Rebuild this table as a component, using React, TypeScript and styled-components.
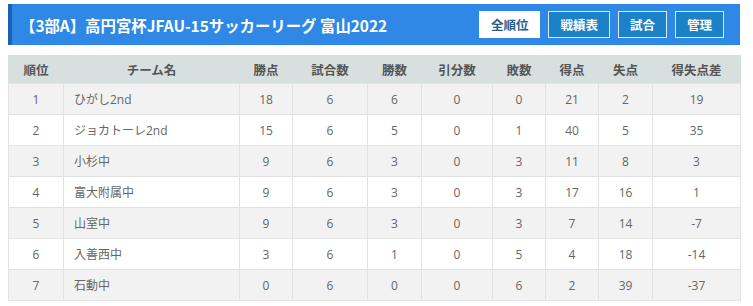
import React from 'react';
import styled, { createGlobalStyle } from 'styled-components';

const GlobalStyle = createGlobalStyle`
  body {
    margin: 0;
    background: #fff;
    font-family: "Open Sans", "Noto Sans CJK JP", sans-serif;
  }
`;

type Row = [number, string, number, number, number, number, number, number, number, number];

const rows: Row[] = [
    [1, 'ひがし2nd', 18, 6, 6, 0, 0, 21, 2, 19],
    [2, 'ジョカトーレ2nd', 15, 6, 5, 0, 1, 40, 5, 35],
    [3, '小杉中', 9, 6, 3, 0, 3, 11, 8, 3],
    [4, '富大附属中', 9, 6, 3, 0, 3, 17, 16, 1],
    [5, '山室中', 9, 6, 3, 0, 3, 7, 14, -7],
    [6, '入善西中', 3, 6, 1, 0, 5, 4, 18, -14],
    [7, '石動中', 0, 6, 0, 0, 6, 2, 39, -37],
];

const columns = [
    { label: '順位', width: 55 },
    { label: 'チーム名', width: 176 },
    { label: '勝点', width: 53 },
    { label: '試合数', width: 75 },
    { label: '勝数', width: 54 },
    { label: '引分数', width: 71 },
    { label: '敗数', width: 53 },
    { label: '得点', width: 53 },
    { label: '失点', width: 54 },
    { label: '得失点差', width: 88 },
];

const App: React.FC = () => {
    return (
        <>
            <GlobalStyle />
            <Page>
                <TitleBar>
                    <Title>【3部A】高円宮杯JFAU-15サッカーリーグ 富山2022</Title>
                    <Tabs>
                        <TabButton $active>全順位</TabButton>
                        <TabButton>戦績表</TabButton>
                        <TabButton>試合</TabButton>
                        <TabButton>管理</TabButton>
                    </Tabs>
                </TitleBar>

                <Table>
                    <colgroup>
                        {columns.map((c) => (
                            <col key={c.label} style={{ width: c.width }} />
                        ))}
                    </colgroup>
                    <thead>
                        <tr>
                            {columns.map((c) => (
                                <Th key={c.label}>{c.label}</Th>
                            ))}
                        </tr>
                    </thead>
                    <tbody>
                        {rows.map((r, i) => (
                            <BodyRow key={r[0]} $odd={i % 2 === 0}>
                                {r.map((v, j) => (
                                    <Td key={j} $left={j === 1}>{v}</Td>
                                ))}
                            </BodyRow>
                        ))}
                    </tbody>
                </Table>
            </Page>
        </>
    );
};
export default App;

const Page = styled.div`
  padding: 4px 13px 0 8px;
  width: 732px;
`;

const TitleBar = styled.div`
  display: flex;
  align-items: center;
  justify-content: space-between;
  height: 41px;
  background: #2f88e6;
  border-left: 4px solid #1a62b8;
  padding: 0 16px 0 8px;
  box-sizing: border-box;
`;

const Title = styled.h1`
  margin: 0;
  color: #fff;
  font-size: 15.4px;
  font-weight: 700;
  letter-spacing: 0;
  font-family: "Noto Sans CJK JP", sans-serif;
`;

const Tabs = styled.div`
  display: flex;
  gap: 8px;
  align-items: center;
`;

const TabButton = styled.span<{ $active?: boolean }>`
  display: inline-flex;
  align-items: center;
  justify-content: center;
  height: 27px;
  padding: 0 11px;
  box-sizing: border-box;
  border: 1px solid ${(p) => (p.$active ? '#fff' : '#d6ecfb')};
  background: ${(p) => (p.$active ? '#fff' : '#1b82c9')};
  color: ${(p) => (p.$active ? '#1f5f8e' : '#fff')};
  font-size: 12.5px;
  font-weight: 700;
  font-family: "Noto Sans CJK JP", sans-serif;
`;

const Table = styled.table`
  margin-top: 10px;
  width: 732px;
  border-collapse: collapse;
  table-layout: fixed;
  font-family: "Open Sans", "Noto Sans CJK JP", sans-serif;
`;

const Th = styled.th`
  height: 27px;
  padding: 0;
  background: #d7e0df;
  color: #555;
  font-size: 12.5px;
  font-weight: 700;
  text-align: center;
  border: 1px solid #d7e0df;
  border-bottom: 1px solid #e4e4e4;
  font-family: "Noto Sans CJK JP", sans-serif;
`;

const BodyRow = styled.tr<{ $odd: boolean }>`
  background: ${(p) => (p.$odd ? '#f2f2f2' : '#fff')};
`;

const Td = styled.td<{ $left?: boolean }>`
  height: 30px;
  padding: 0 ${(p) => (p.$left ? '10px' : '0')};
  border: 1px solid #e2e2e2;
  color: #666;
  font-size: 12px;
  text-align: ${(p) => (p.$left ? 'left' : 'center')};
`;
